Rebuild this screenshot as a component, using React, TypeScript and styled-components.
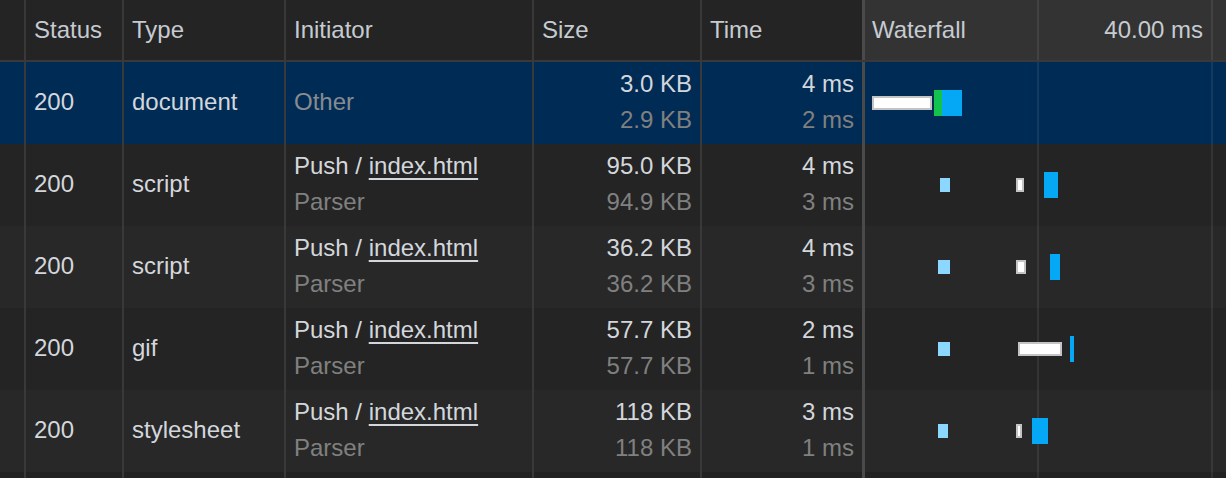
import React from "react";
import styled, { createGlobalStyle } from "styled-components";

const Global = createGlobalStyle`
  html, body { margin: 0; padding: 0; background: #222222; }
  body { font-family: "Liberation Sans", Arial, Helvetica, sans-serif; }
  * { box-sizing: border-box; }
`;

const COLS = "24px 98px 162px 248px 168px 162px 1fr";

const Panel = styled.div`
  width: 1226px;
  height: 478px;
  overflow: hidden;
  background: #222222;
  font-size: 24px;
  line-height: 36px;
  color: #d3d7dc;
`;

const HeaderRow = styled.div`
  display: grid;
  grid-template-columns: ${COLS};
  height: 62px;
  background: #242424;
  border-bottom: 2px solid #393939;
`;

const Row = styled.div<{ $bg: string }>`
  display: grid;
  grid-template-columns: ${COLS};
  height: 82px;
  background: ${(p) => p.$bg};
`;

const Filler = styled.div`
  display: grid;
  grid-template-columns: ${COLS};
  height: 6px;
  background: #222222;
`;

const Gutter = styled.div``;

const Cell = styled.div<{ $right?: boolean }>`
  border-left: 2px solid #393939;
  padding: 0 8px 2px 8px;
  display: flex;
  flex-direction: column;
  justify-content: center;
  align-items: ${(p) => (p.$right ? "flex-end" : "flex-start")};
  white-space: nowrap;
  overflow: hidden;
`;

const HeadCell = styled(Cell)`
  padding-bottom: 0;
  color: #c6cbd1;
`;

const Primary = styled.span`
  color: #d3d7dc;
`;

const Secondary = styled.span<{ $dim?: boolean }>`
  color: ${(p) => (p.$dim ? "#878b90" : "#808080")};
`;

const Link = styled.span`
  text-decoration: underline;
  text-decoration-thickness: 2px;
  text-underline-offset: 4px;
`;

const WaterfallHead = styled.div`
  position: relative;
  border-left: 3px solid #4a4a4a;
  background: #333333;
  display: flex;
  align-items: center;
  color: #c6cbd1;
`;

const WfLabel = styled.span`
  padding-left: 7px;
`;

const WfScale = styled.span`
  position: absolute;
  left: 172px;
  width: 174px;
  padding-right: 8px;
  text-align: right;
`;

const WaterfallCell = styled.div`
  position: relative;
  border-left: 3px solid #4a4a4a;
`;

const GridLine = styled.div`
  position: absolute;
  top: 0;
  bottom: 0;
  width: 2px;
  background: rgba(255, 255, 255, 0.075);
`;

type BarKind = "wait" | "queue" | "ttfb" | "download";

const Bar = styled.div<{ $kind: BarKind }>`
  position: absolute;
  top: ${(p) => (p.$kind === "queue" || p.$kind === "wait" ? 34 : 28)}px;
  height: ${(p) => (p.$kind === "queue" || p.$kind === "wait" ? 14 : 26)}px;
  background: ${(p) =>
    p.$kind === "wait"
      ? "#ffffff"
      : p.$kind === "queue"
      ? "#8bd7ff"
      : p.$kind === "ttfb"
      ? "#12c34d"
      : "#05a8f4"};
  border: ${(p) => (p.$kind === "wait" ? "2px solid #c4c4c4" : "none")};
`;

type Seg = { kind: BarKind; left: number; width: number };

type Req = {
  status: string;
  type: string;
  initiator: "other" | "push";
  size: string;
  resource: string;
  time: string;
  latency: string;
  bars: Seg[];
};

const requests: Req[] = [
  {
    status: "200",
    type: "document",
    initiator: "other",
    size: "3.0 KB",
    resource: "2.9 KB",
    time: "4 ms",
    latency: "2 ms",
    bars: [
      { kind: "wait", left: 7, width: 60 },
      { kind: "ttfb", left: 69, width: 8 },
      { kind: "download", left: 77, width: 20 },
    ],
  },
  {
    status: "200",
    type: "script",
    initiator: "push",
    size: "95.0 KB",
    resource: "94.9 KB",
    time: "4 ms",
    latency: "3 ms",
    bars: [
      { kind: "queue", left: 75, width: 10 },
      { kind: "wait", left: 151, width: 8 },
      { kind: "download", left: 179, width: 14 },
    ],
  },
  {
    status: "200",
    type: "script",
    initiator: "push",
    size: "36.2 KB",
    resource: "36.2 KB",
    time: "4 ms",
    latency: "3 ms",
    bars: [
      { kind: "queue", left: 73, width: 12 },
      { kind: "wait", left: 151, width: 10 },
      { kind: "download", left: 185, width: 10 },
    ],
  },
  {
    status: "200",
    type: "gif",
    initiator: "push",
    size: "57.7 KB",
    resource: "57.7 KB",
    time: "2 ms",
    latency: "1 ms",
    bars: [
      { kind: "queue", left: 73, width: 12 },
      { kind: "wait", left: 153, width: 44 },
      { kind: "download", left: 205, width: 4 },
    ],
  },
  {
    status: "200",
    type: "stylesheet",
    initiator: "push",
    size: "118 KB",
    resource: "118 KB",
    time: "3 ms",
    latency: "1 ms",
    bars: [
      { kind: "queue", left: 73, width: 10 },
      { kind: "wait", left: 151, width: 6 },
      { kind: "download", left: 167, width: 16 },
    ],
  },
];

const rowBg = (i: number) => (i === 0 ? "#002b55" : i % 2 === 1 ? "#242424" : "#282828");

const GridLines = () => (
  <>
    <GridLine style={{ left: 172 }} />
    <GridLine style={{ left: 346 }} />
  </>
);

export default function App() {
  return (
    <Panel>
      <Global />
      <HeaderRow>
        <Gutter />
        <HeadCell>Status</HeadCell>
        <HeadCell>Type</HeadCell>
        <HeadCell>Initiator</HeadCell>
        <HeadCell>Size</HeadCell>
        <HeadCell>Time</HeadCell>
        <WaterfallHead>
          <GridLines />
          <WfLabel>Waterfall</WfLabel>
          <WfScale>40.00 ms</WfScale>
        </WaterfallHead>
      </HeaderRow>
      {requests.map((r, i) => (
        <Row key={i} $bg={rowBg(i)}>
          <Gutter />
          <Cell>
            <Primary>{r.status}</Primary>
          </Cell>
          <Cell>
            <Primary>{r.type}</Primary>
          </Cell>
          <Cell>
            {r.initiator === "other" ? (
              <Secondary $dim>Other</Secondary>
            ) : (
              <>
                <Primary>
                  Push / <Link>index.html</Link>
                </Primary>
                <Secondary>Parser</Secondary>
              </>
            )}
          </Cell>
          <Cell $right>
            <Primary>{r.size}</Primary>
            <Secondary>{r.resource}</Secondary>
          </Cell>
          <Cell $right>
            <Primary>{r.time}</Primary>
            <Secondary>{r.latency}</Secondary>
          </Cell>
          <WaterfallCell>
            <GridLines />
            {r.bars.map((b, j) => (
              <Bar key={j} $kind={b.kind} style={{ left: b.left, width: b.width }} />
            ))}
          </WaterfallCell>
        </Row>
      ))}
      <Filler>
        <Gutter />
        <Cell />
        <Cell />
        <Cell />
        <Cell />
        <Cell />
        <WaterfallCell>
          <GridLines />
        </WaterfallCell>
      </Filler>
    </Panel>
  );
}
